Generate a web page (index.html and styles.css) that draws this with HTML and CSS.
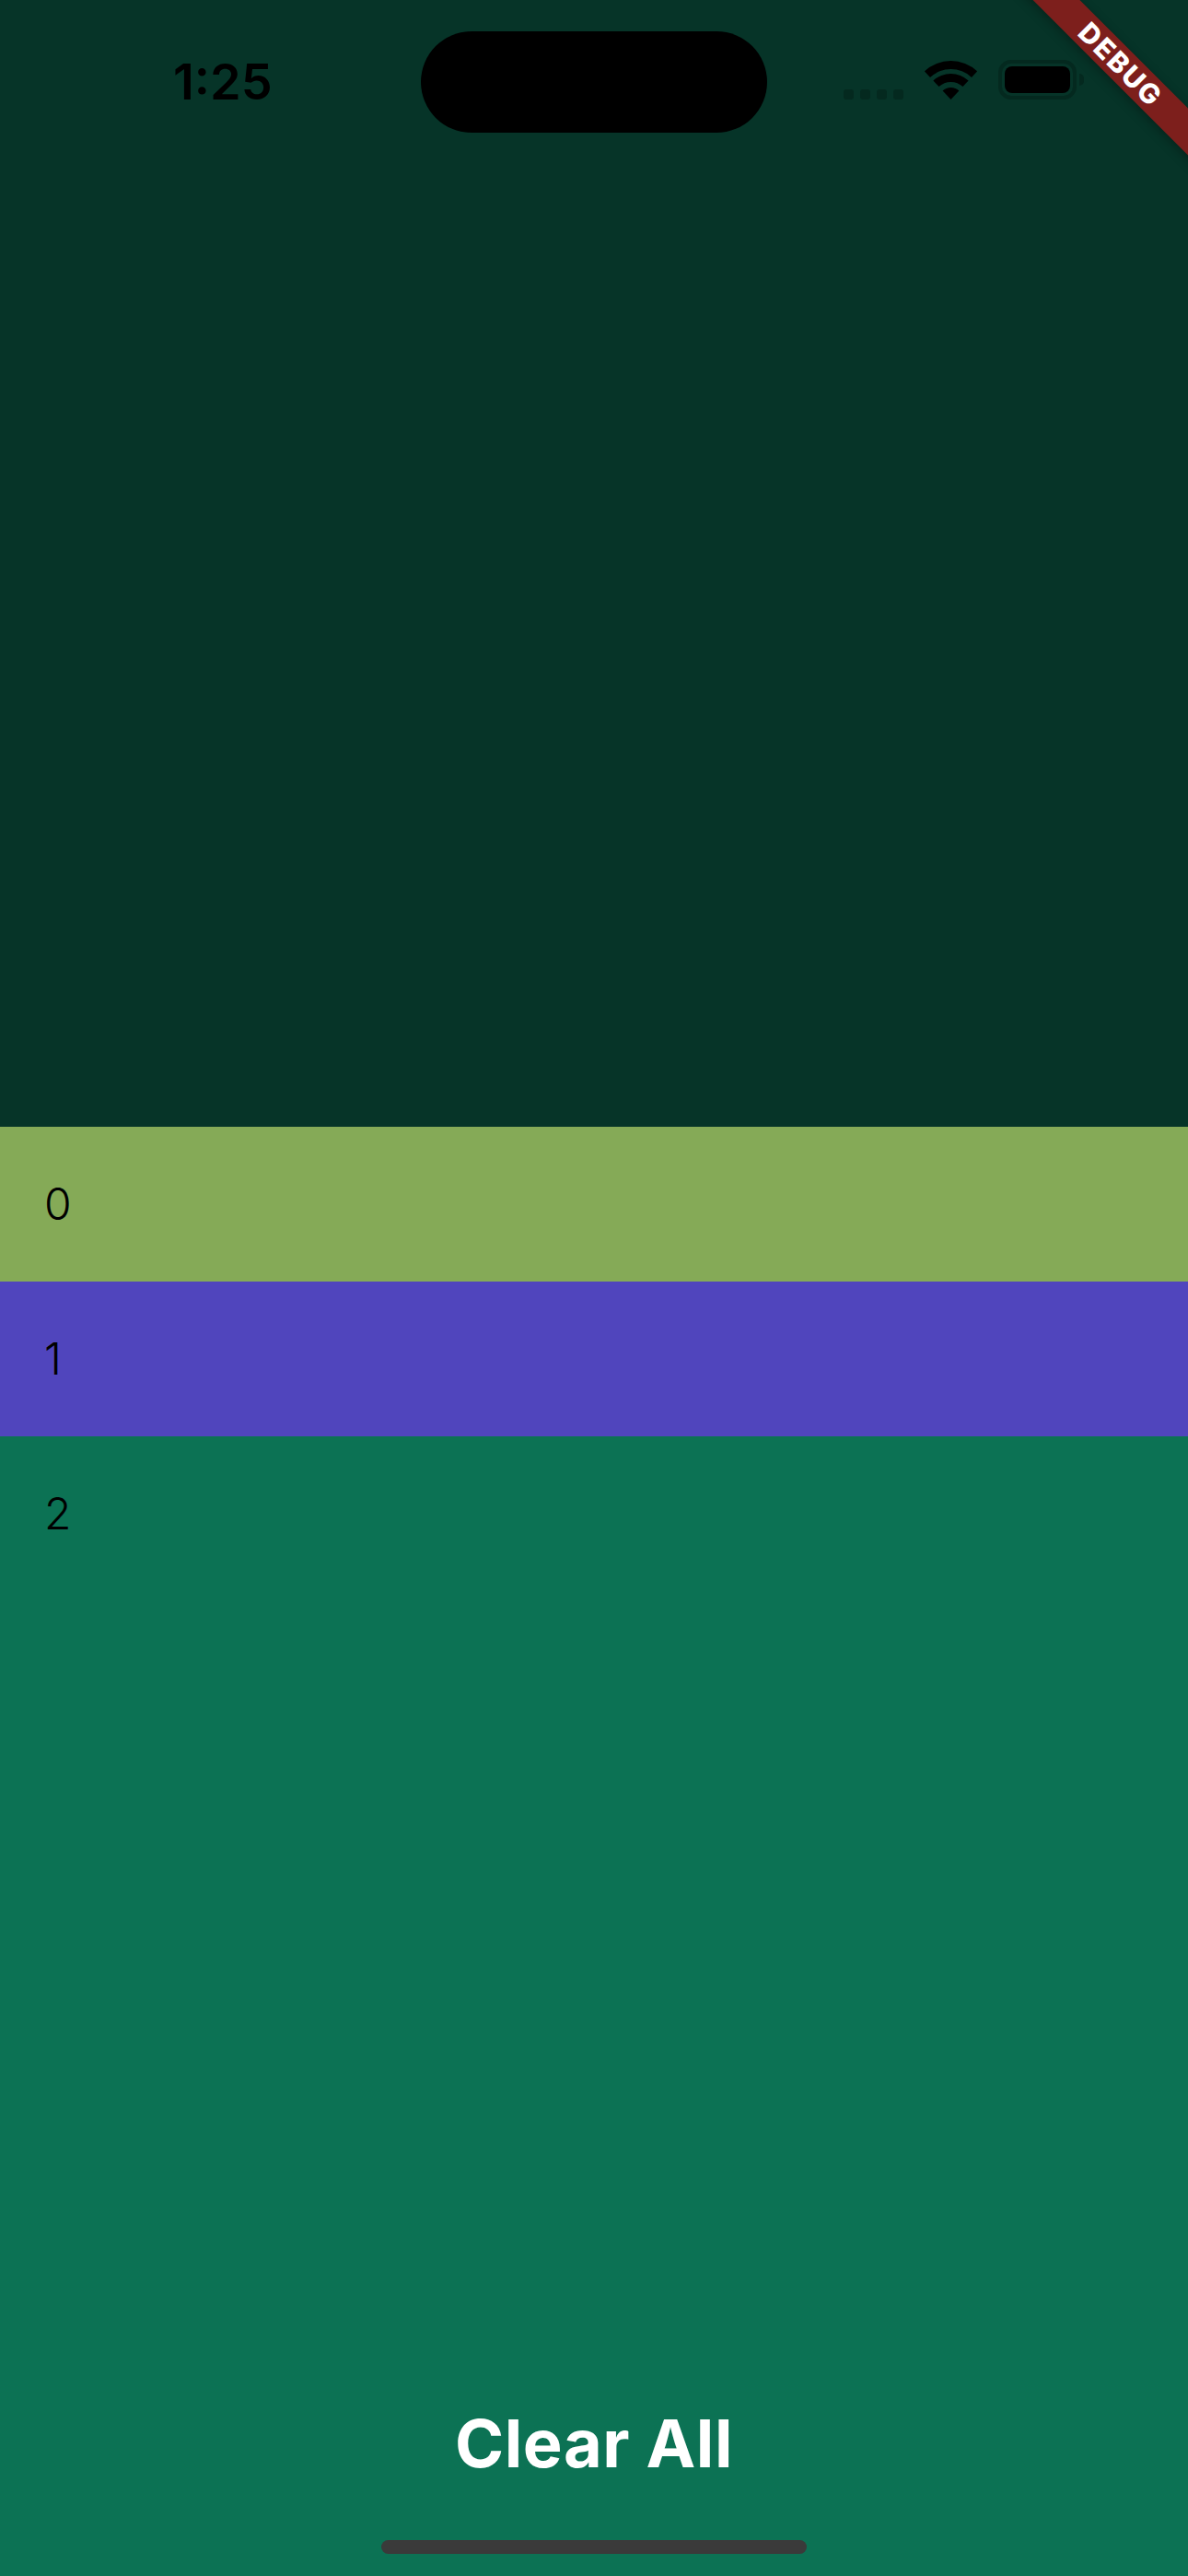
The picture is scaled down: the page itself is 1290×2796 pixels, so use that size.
FILE: index.html

```html
<!DOCTYPE html>
<html lang="en">
<head>
    <meta charset="UTF-8">
    <meta name="viewport" content="width=device-width, initial-scale=1.0">
    <title>List</title>
    <link rel="stylesheet" href="styles.css">
</head>
<body>
    <div class="debug-banner"><span>DEBUG</span></div>

    <header class="top-area">
        <div class="status-bar">
            <div class="status-time">1:25</div>
            <div class="island"></div>
            <div class="status-icons">
                <div class="signal">
                    <span></span><span></span><span></span><span></span>
                </div>
                <svg class="wifi" width="57" height="42" viewBox="0 0 57 42">
                    <path d="M-.1 11.3A42 42 0 0 1 57.1 11.3L51 17.9A33 33 0 0 0 6 17.9Z"/>
                    <path d="M9.4 21.5A28 28 0 0 1 47.6 21.5L41.5 28.1A19 19 0 0 0 15.5 28.1Z"/>
                    <path d="M19.6 32.5A13 13 0 0 1 37.4 32.5L28.5 42Z"/>
                </svg>
                <div class="battery">
                    <div class="battery-body"><div class="battery-level"></div></div>
                    <div class="battery-nub"></div>
                </div>
            </div>
        </div>
    </header>

    <ul class="item-list">
        <li class="item item-0">0</li>
        <li class="item item-1">1</li>
        <li class="item item-2">2</li>
    </ul>

    <footer class="bottom-area">
        <button class="clear-btn" type="button">Clear All</button>
        <div class="home-bar"></div>
    </footer>
</body>
</html>
```

FILE: styles.css

```css
:root {
    --top-bg: #063428;
    --green-bg: #0c7254;
    --row-0: #85aa57;
    --row-1: #5045bd;
    --status-dim: #04291f;
}

* {
    box-sizing: border-box;
}

html, body {
    height: 100%;
}

body {
    margin: 0;
    display: flex;
    flex-direction: column;
    min-height: 2796px;
    overflow: hidden;
    position: relative;
    font-family: Inter, "Liberation Sans", sans-serif;
    background-color: var(--green-bg);
    color: #000000;
}

.top-area {
    height: 1223px;
    background-color: var(--top-bg);
}

.status-bar {
    display: flex;
    align-items: flex-start;
    padding: 34px 0 0 188px;
}

.status-time {
    width: 269px;
    margin-top: 25px;
    font-size: 54px;
    font-weight: 600;
    line-height: 60px;
}

.island {
    width: 376px;
    height: 110px;
    border-radius: 55px;
    background-color: #000000;
}

.status-icons {
    display: flex;
    align-items: flex-end;
    margin: 31px 0 0 83px;
}

.signal {
    display: flex;
    gap: 7px;
    margin-right: 23px;
}

.signal span {
    width: 11px;
    height: 11px;
    border-radius: 3px;
    background-color: var(--status-dim);
}

.wifi {
    display: block;
    fill: #000000;
    margin-right: 23px;
}

.battery {
    display: flex;
    align-items: center;
}

.battery-body {
    width: 85px;
    height: 43px;
    padding: 3px;
    border: 4px solid var(--status-dim);
    border-radius: 14px;
}

.battery-level {
    height: 100%;
    border-radius: 8px;
    background-color: #000000;
}

.battery-nub {
    width: 5px;
    height: 13px;
    margin-left: 3px;
    border-radius: 0 6px 6px 0;
    background-color: var(--status-dim);
}

.item-list {
    list-style: none;
    margin: 0;
    padding: 0;
}

.item {
    height: 168px;
    padding-left: 48px;
    font-size: 48px;
    font-weight: 300;
    line-height: 168px;
}

.item-0 {
    background-color: var(--row-0);
}

.item-1 {
    background-color: var(--row-1);
}

.item-2 {
    background-color: var(--green-bg);
}

.bottom-area {
    flex-grow: 1;
    display: flex;
    flex-direction: column;
    align-items: center;
    justify-content: flex-end;
    padding-bottom: 24px;
}

.clear-btn {
    margin-bottom: 61px;
    padding: 0;
    border: none;
    background: none;
    color: #ffffff;
    font-family: inherit;
    font-size: 72px;
    font-weight: 700;
    letter-spacing: 0.5px;
    line-height: 88px;
}

.home-bar {
    width: 462px;
    height: 15px;
    border-radius: 8px;
    background-color: #3a3a3a;
}

/* corner ribbon, sits over the page */
.debug-banner {
    position: absolute;
    top: 52px;
    right: -77px;
    width: 300px;
    height: 36px;
    transform: rotate(45deg);
    background-color: #7d1f1c;
    box-shadow: 0 3px 12px rgba(0, 0, 0, 0.3);
    color: #ffffff;
    font-size: 30px;
    font-weight: 800;
    letter-spacing: 2px;
    line-height: 36px;
    text-align: center;
}
```
